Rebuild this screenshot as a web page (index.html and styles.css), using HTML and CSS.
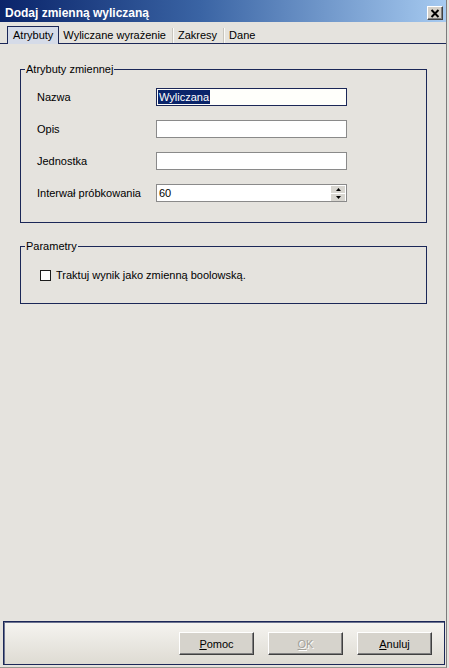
FILE: index.html
```html
<!DOCTYPE html>
<html lang="pl">
<head>
    <meta charset="UTF-8">
    <title>Dodaj zmienną wyliczaną</title>
    <link rel="stylesheet" href="styles.css">
</head>
<body>
    <div class="window">
        <div class="titlebar">
            <span class="title">Dodaj zmienną wyliczaną</span>
            <button type="button" class="close-btn">
                <svg width="10" height="9" viewBox="0 0 10 9">
                    <path d="M1.5 1 L8.5 8 M8.5 1 L1.5 8" stroke="#000" stroke-width="2" fill="none"/>
                </svg>
            </button>
        </div>

        <!-- Tabs -->
        <div class="tabs">
            <div class="tab tab-active">Atrybuty</div>
            <div class="tab">Wyliczane wyrażenie</div>
            <div class="tab tab-sep">Zakresy</div>
            <div class="tab tab-sep">Dane</div>
        </div>

        <div class="page">
            <fieldset class="group group-attrs">
                <legend>Atrybuty zmiennej</legend>
                <div class="form-grid">
                    <label class="form-label">Nazwa</label>
                    <div class="textbox textbox-focus"><span class="selected">Wyliczana</span></div>

                    <label class="form-label">Opis</label>
                    <div class="textbox"></div>

                    <label class="form-label">Jednostka</label>
                    <div class="textbox"></div>

                    <label class="form-label">Interwał próbkowania</label>
                    <div class="textbox textbox-spin">
                        <span class="spin-value">60</span>
                        <div class="spin">
                            <div class="spin-btn">
                                <svg width="5" height="3" viewBox="0 0 5 3"><path d="M0 3 L2.5 0 L5 3 Z" fill="#000"/></svg>
                            </div>
                            <div class="spin-btn">
                                <svg width="5" height="3" viewBox="0 0 5 3"><path d="M0 0 L2.5 3 L5 0 Z" fill="#000"/></svg>
                            </div>
                        </div>
                    </div>
                </div>
            </fieldset>

            <fieldset class="group group-params">
                <legend>Parametry</legend>
                <label class="check-row">
                    <span class="checkbox"></span>
                    Traktuj wynik jako zmienną boolowską.
                </label>
            </fieldset>

            <div class="footer">
                <button type="button" class="btn"><u>P</u>omoc</button>
                <button type="button" class="btn btn-disabled"><u>O</u>K</button>
                <button type="button" class="btn"><u>A</u>nuluj</button>
            </div>
        </div>
    </div>
</body>
</html>
```

FILE: styles.css
```css
body {
    margin: 0;
    background-color: #e5e3de;
    font-family: 'Liberation Sans', Arial, sans-serif;
    font-size: 11px;
    color: #000;
    overflow: hidden;
}
.window {
    width: 446px;
    height: 667px;
    border-right: 1px solid #7c7c7c;
    border-bottom: 1px solid #9a9891;
    background-color: #e5e3de;
    display: flex;
    flex-direction: column;
}
.titlebar {
    height: 22px;
    flex-shrink: 0;
    background: linear-gradient(90deg, #0a246a 0%, #3a64a4 45%, #a6caf0 100%);
    display: flex;
    align-items: flex-start;
    justify-content: space-between;
    padding: 0 3px 0 5px;
    box-sizing: border-box;
}
.title {
    color: #fff;
    font-weight: bold;
    font-size: 12px;
    line-height: 14px;
    margin-top: 6px;
}
.close-btn {
    width: 16px;
    height: 14px;
    margin-top: 6px;
    padding: 0;
    background: #d4d0c8;
    border: 1px solid;
    border-color: #fff #404040 #404040 #fff;
    box-shadow: inset -1px -1px #808080;
    display: flex;
    align-items: center;
    justify-content: center;
}
.tabs {
    height: 22px;
    flex-shrink: 0;
    box-sizing: border-box;
    border-bottom: 1px solid #1b2757;
    display: flex;
    align-items: flex-end;
    padding-left: 7px;
}
.tab {
    height: 15px;
    line-height: 14px;
    padding: 0 4px 0 4px;
    margin-bottom: 0;
    white-space: nowrap;
}
.tab-active {
    height: 17px;
    line-height: 17px;
    padding: 0 5px 0 5px;
    margin-bottom: -1px;
    background: #d5dbe8;
    border: 1px solid #1b2757;
    border-bottom: none;
}
.tab-sep {
    border-left: 1px solid #fbfbf9;
    box-shadow: -1px 0 #c9c6bf;
    padding-left: 4px;
    margin-left: 3px;
}
.page {
    flex: 1;
    display: flex;
    flex-direction: column;
}
.group {
    margin: 19px 19px 0 20px;
    border: 1px solid #1b2757;
    padding: 12px 18px 20px 4px;
    min-width: 0;
}
.group legend {
    padding: 0 1px;
    line-height: 13px;
}
.group-params {
    margin-top: 17px;
    padding: 16px 18px 21px 4px;
}
.form-grid {
    display: grid;
    grid-template-columns: 119px 191px;
    row-gap: 14px;
    align-items: center;
    padding-left: 12px;
}
.form-label {
    line-height: 13px;
}
.textbox {
    height: 18px;
    box-sizing: border-box;
    background: #fff;
    border: 1px solid #8a8a8a;
    display: flex;
    align-items: center;
    padding-left: 2px;
}
.textbox-focus {
    border-color: #1b2757;
    background: #fffffb;
    padding-left: 1px;
}
.selected {
    background: #0a246a;
    color: #fff;
    line-height: 14px;
    padding: 0 1px;
}
.textbox-spin {
    justify-content: space-between;
    padding-right: 1px;
}
.spin-value {
    line-height: 13px;
}
.spin {
    display: flex;
    flex-direction: column;
    gap: 1px;
}
.spin-btn {
    width: 14px;
    height: 7px;
    background: #d8d6d0;
    display: flex;
    align-items: center;
    justify-content: center;
}
.check-row {
    display: flex;
    align-items: center;
    gap: 5px;
    padding-left: 15px;
    line-height: 13px;
}
.checkbox {
    width: 11px;
    height: 11px;
    box-sizing: border-box;
    border: 1px solid #1c1c1c;
    background: #fff;
}
.footer {
    margin: auto 1px 2px 3px;
    border: 1px solid #1b2757;
    box-shadow: inset 1px 1px #6c7390;
    padding: 10px 12px 9px;
    background: linear-gradient(180deg, #f5f4f0, #dedbd3);
    display: flex;
    justify-content: flex-end;
    gap: 14px;
}
.btn {
    width: 75px;
    height: 23px;
    padding: 0;
    font-family: 'Liberation Sans', Arial, sans-serif;
    font-size: 11px;
    color: #000;
    background: #d6d3cc;
    border: 1px solid;
    border-color: #fff #404040 #404040 #fff;
    box-shadow: inset -1px -1px #808080;
}
.btn-disabled {
    color: #a3a199;
    text-shadow: 1px 1px #fff;
}
```
